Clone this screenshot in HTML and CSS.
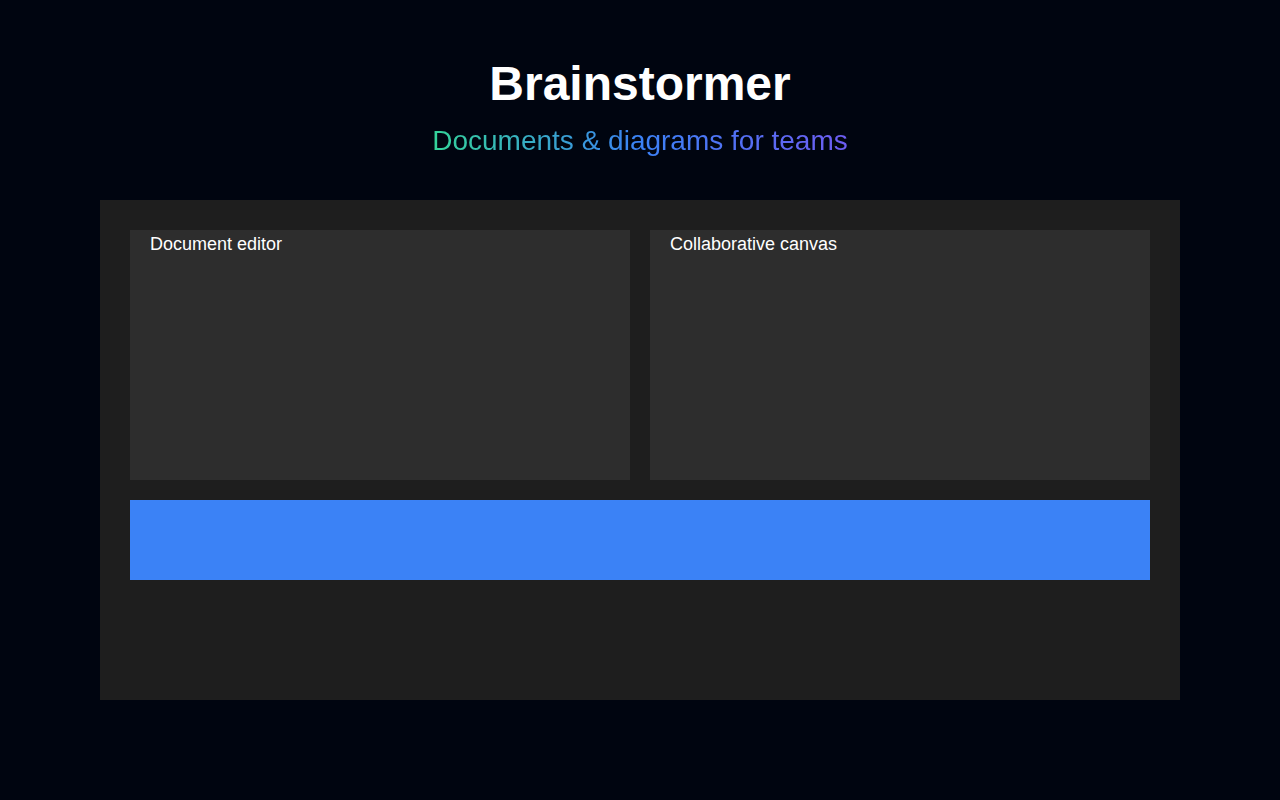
FILE: index.html
```html
<!DOCTYPE html>
<html lang="en">
<head>
<meta charset="utf-8">
<title>Brainstormer</title>
<link rel="stylesheet" href="styles.css">
</head>
<body>
<header class="hero">
  <h1 class="title">Brainstormer</h1>
  <p class="subtitle"><span class="grad">Documents &amp; diagrams for teams</span></p>
</header>
<main class="panel">
  <div class="cards">
    <section class="card"><h2 class="card-title">Document editor</h2></section>
    <section class="card"><h2 class="card-title">Collaborative canvas</h2></section>
  </div>
  <div class="bar"></div>
</main>
</body>
</html>
```
FILE: styles.css
```css
html, body {
  margin: 0;
  padding: 0;
}
body {
  background: #000510;
  font-family: "Liberation Sans", Arial, sans-serif;
  color: #ffffff;
  width: 1280px;
  height: 800px;
}
.hero {
  padding: 56px 0 43px;
  text-align: center;
}
.title {
  margin: 0;
  font-size: 48px;
  font-weight: 700;
  line-height: 55px;
  color: #ffffff;
}
.subtitle {
  margin: 14px 0 0;
  font-size: 28px;
  line-height: 32px;
}
.grad {
  display: inline-block;
  background: linear-gradient(90deg, #34d399 0%, #3b82f6 50%, #6d5df2 100%);
  -webkit-background-clip: text;
  background-clip: text;
  color: transparent;
}
.panel {
  box-sizing: border-box;
  width: 1080px;
  height: 500px;
  margin: 0 auto;
  padding: 30px;
  background: #1e1e1e;
  display: flex;
  flex-direction: column;
  gap: 20px;
}
.cards {
  display: grid;
  grid-template-columns: 1fr 1fr;
  gap: 20px;
}
.card {
  height: 250px;
  background: #2d2d2d;
  box-sizing: border-box;
  padding: 4px 20px;
}
.card-title {
  margin: 0;
  font-size: 18px;
  font-weight: 400;
  color: #ffffff;
}
.bar {
  height: 80px;
  background: #3b82f6;
}
```
